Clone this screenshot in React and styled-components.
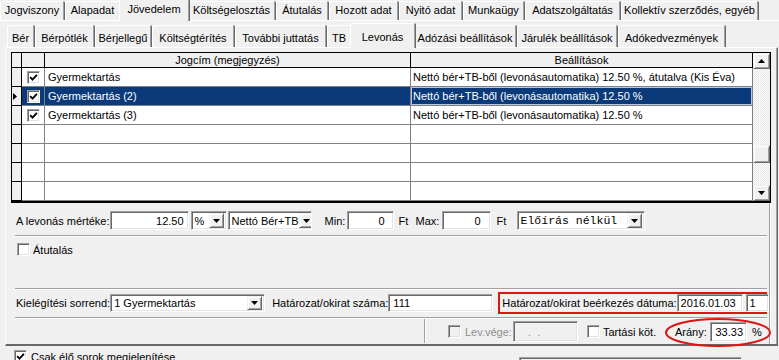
import React from "react";
import styled, { createGlobalStyle, css } from "styled-components";

const SEL = "#0a3a7a";
const RED = "#e01414";

const GlobalStyle = createGlobalStyle`
  html, body { margin: 0; padding: 0; background: #f0f0f0; }
  body {
    font-family: "Liberation Sans", Arial, sans-serif;
    font-size: 11px;
    color: #000;
  }
`;

const raised = css`
  background: #f0f0f0;
  border: 1px solid;
  border-color: #f0f0f0 #696969 #696969 #f0f0f0;
  box-shadow: inset 1px 1px #fff, inset -1px -1px #a0a0a0;
`;

const sunken = css`
  border: 1px solid;
  border-color: #a0a0a0 #fff #fff #a0a0a0;
  box-shadow: inset 1px 1px #696969, inset -1px -1px #e3e3e3;
`;

const Window = styled.div`
  width: 779px;
  height: 360px;
  overflow: hidden;
  background: #f0f0f0;
  display: flex;
  flex-direction: column;
`;

// tabs
const TabStrip = styled.div`
  display: flex;
  align-items: flex-end;
  flex-shrink: 0;
  height: ${p => p.$h}px;
  padding-left: ${p => p.$pl}px;
`;

const Tab = styled.div`
  position: relative;
  z-index: ${p => (p.$active ? 2 : 1)};
  flex: 0 0 ${p => (p.$active ? p.$w + 4 : p.$w)}px;
  height: ${p => (p.$active ? p.$h + 3 : p.$h)}px;
  margin: 0 ${p => (p.$active ? -2 : 0)}px ${p => (p.$active ? -1 : 0)}px;
  padding: ${p => p.$pt}px 0 ${p => (p.$active ? p.$pb + 1 : p.$pb)}px;
  box-sizing: border-box;
  display: flex;
  align-items: center;
  justify-content: center;
  background: #f0f0f0;
  border-right: 1px solid #696969;
  border-radius: 2px 2px 0 0;
  box-shadow: inset 1px 1px #fff, inset -1px 0 #a0a0a0;
  white-space: nowrap;
`;

const OuterPage = styled.div`
  flex-shrink: 0;
  border-top: 1px solid #fff;
  display: flex;
  flex-direction: column;
`;

const InnerPage = styled.div`
  margin-left: 5px;
  width: 773px;
  box-sizing: border-box;
  border-top: 1px solid #fff;
  border-left: 1px solid #fff;
  border-right: 1px solid #696969;
  border-bottom: 2px solid #696969;
  box-shadow: inset -1px 0 #a0a0a0;
  padding: 4px 0 0 5px;
`;

// grid
const GridBox = styled.div`
  width: 760px;
  height: 151px;
  box-sizing: border-box;
  border: 1px solid #000;
  border-bottom-width: 2px;
  display: flex;
  background: #fff;
`;

const Table = styled.div`
  flex: 1;
  display: flex;
  flex-direction: column;
`;

const GRow = styled.div`
  display: flex;
  flex: 0 0 ${p => (p.$header ? 15 : 19)}px;
`;

const GCell = styled.div`
  flex: 0 0 ${p => p.$w}px;
  box-sizing: border-box;
  display: flex;
  align-items: center;
  justify-content: ${p => (p.$center ? "center" : "flex-start")};
  padding-left: ${p => p.$pad || 0}px;
  border-right: 1px solid ${p => (p.$fixed ? "#000" : "#808080")};
  border-bottom: 1px solid ${p => (p.$fixed ? "#000" : "#808080")};
  background: ${p => (p.$fixed ? "#f0f0f0" : p.$sel ? SEL : "#fff")};
  color: ${p => (p.$sel ? "#fff" : "#000")};
  box-shadow: ${p => (p.$focus ? "inset 0 0 0 1px #b9c6df" : "none")};
  white-space: nowrap;
  overflow: hidden;
`;

const VScroll = styled.div`
  flex: 0 0 17px;
  display: flex;
  flex-direction: column;
  background: repeating-conic-gradient(#fff 0 25%, #e4e4e4 0 50%) 0 0 / 2px 2px;
`;

const ScrollBtn = styled.div`
  ${raised};
  box-sizing: border-box;
  flex: 0 0 16px;
  display: flex;
  align-items: center;
  justify-content: center;
`;

const Track = styled.div`
  flex: 1;
`;

const Thumb = styled.div`
  ${raised};
  box-sizing: border-box;
  height: 18px;
  margin-top: 76px;
`;

// form
const FormPanel = styled.div`
  width: 760px;
  box-sizing: border-box;
  border-right: 1px solid #fff;
  box-shadow: inset -1px 0 #a0a0a0;
  padding: 8px 0 0 5px;
  display: flex;
  flex-direction: column;
`;

const FormRow = styled.div`
  display: flex;
  align-items: center;
  height: ${p => p.$h}px;
  margin-top: ${p => p.$mt || 0}px;
`;

const Etched = styled.div`
  height: 0;
  border-top: 1px solid #a0a0a0;
  border-bottom: 1px solid #fff;
  margin: ${p => p.$mt}px 3px 0 -1px;
`;

const Label = styled.span`
  flex: 0 0 ${p => (p.$w ? `${p.$w}px` : "auto")};
  margin-left: ${p => p.$ml || 0}px;
  color: ${p => (p.$disabled ? "#8d8d8d" : "#000")};
  white-space: nowrap;
`;

const Edit = styled.div`
  ${sunken};
  flex: 0 0 ${p => p.$w}px;
  height: ${p => p.$h || 19}px;
  margin-left: ${p => p.$ml || 0}px;
  box-sizing: border-box;
  display: flex;
  align-items: center;
  justify-content: ${p => (p.$right ? "flex-end" : "flex-start")};
  padding: 0 ${p => p.$pr ?? 3}px 0 ${p => p.$pl ?? 3}px;
  background: ${p => (p.$disabled ? "#f0f0f0" : "#fff")};
  color: ${p => (p.$disabled ? "#8d8d8d" : "#000")};
  white-space: pre;
  overflow: hidden;
`;

const ComboText = styled.span`
  flex: 1;
  white-space: pre;
  font-family: ${p => (p.$mono ? '"Liberation Mono", "Courier New", monospace' : "inherit")};
  font-size: ${p => (p.$mono ? "11.5px" : "inherit")};
`;

const DropBtn = styled.span`
  ${raised};
  box-sizing: border-box;
  flex: 0 0 15px;
  height: ${p => p.$h}px;
  display: flex;
  align-items: center;
  justify-content: center;
`;

const CheckBox = styled.span`
  ${sunken};
  flex: 0 0 13px;
  width: 13px;
  height: 13px;
  box-sizing: border-box;
  margin-left: ${p => p.$ml || 0}px;
  display: inline-flex;
  align-items: center;
  justify-content: center;
  background: ${p => (p.$disabled ? "#f0f0f0" : "#fff")};
`;

const Highlight = styled.div`
  display: flex;
  align-items: center;
  margin-left: 5px;
  width: 269px;
  height: 22px;
  box-sizing: border-box;
  border: 2px solid ${RED};
  padding-left: 2px;
`;

const LeftWell = styled.div`
  flex: 0 0 410px;
  align-self: stretch;
  box-sizing: border-box;
  border-right: 1px solid #fff;
  box-shadow: inset -1px 0 #a0a0a0;
  margin-bottom: 1px;
`;

const AranyGroup = styled.div`
  position: relative;
  display: flex;
  align-items: center;
`;

const Ring = styled.svg`
  position: absolute;
  left: -10px;
  top: -4px;
  width: 106px;
  height: 29px;
  overflow: visible;
  pointer-events: none;
`;

const BottomBar = styled.div`
  display: grid;
  grid-template-columns: 519px 223px;
  align-items: start;
`;

const OnlyLive = styled.div`
  display: flex;
  align-items: center;
  height: 13px;
  padding: 4px 0 0 14px;
`;

const StubBox = styled.div`
  ${sunken};
  height: 20px;
  margin-top: 11px;
  background: #f0f0f0;
`;

const Down = () => (
  <svg width="7" height="4" viewBox="0 0 7 4">
    <polygon points="0,0 7,0 3.5,4" fill="#000" />
  </svg>
);

const Up = () => (
  <svg width="7" height="4" viewBox="0 0 7 4">
    <polygon points="0,4 7,4 3.5,0" fill="#000" />
  </svg>
);

const Tick = () => (
  <svg width="9" height="9" viewBox="0 0 9 9">
    <polyline points="1.2,4.2 3.5,6.6 7.9,1.8" fill="none" stroke="#000" strokeWidth="1.9" />
  </svg>
);

const Check = ({ checked, ml, disabled }) => (
  <CheckBox $ml={ml} $disabled={disabled}>
    {checked && <Tick />}
  </CheckBox>
);

const Combo = ({ w, h = 19, ml, mono, children }) => (
  <Edit $w={w} $h={h} $ml={ml} $pr={2}>
    <ComboText $mono={mono}>{children}</ComboText>
    <DropBtn $h={h - 4}>
      <Down />
    </DropBtn>
  </Edit>
);

const TOP_TABS = [
  ["Jogviszony", 65],
  ["Alapadat", 56],
  ["Jövedelem", 67, true],
  ["Költségelosztás", 88],
  ["Átutalás", 53],
  ["Hozott adat", 70],
  ["Nyitó adat", 64],
  ["Munkaügy", 62],
  ["Adatszolgáltatás", 96],
  ["Kollektív szerződés, egyéb", 138],
];

const SUB_TABS = [
  ["Bér", 28],
  ["Bérpótlék", 60],
  ["Bérjellegű", 57],
  ["Költségtérítés", 83],
  ["További juttatás", 92],
  ["TB", 25],
  ["Levonás", 62, true],
  ["Adózási beállítások", 103],
  ["Járulék beállítások", 101],
  ["Adókedvezmények", 108],
];

const ROWS = [
  { name: "Gyermektartás", set: "Nettó bér+TB-ből (levonásautomatika) 12.50 %, átutalva (Kis Éva)" },
  { name: "Gyermektartás (2)", set: "Nettó bér+TB-ből (levonásautomatika) 12.50 %", sel: true },
  { name: "Gyermektartás (3)", set: "Nettó bér+TB-ből (levonásautomatika) 12.50 %" },
  {},
  {},
  {},
  {},
];

const App = () => (
  <Window>
    <GlobalStyle />
    <TabStrip $h={20} $pl={0}>
      {TOP_TABS.map(([t, w, a]) => (
        <Tab key={t} $w={w} $h={19} $pt={0} $pb={2} $active={a}>
          {t}
        </Tab>
      ))}
    </TabStrip>

    <OuterPage>
      <TabStrip $h={26} $pl={7}>
        {SUB_TABS.map(([t, w, a]) => (
          <Tab key={t} $w={w} $h={22} $pt={3} $pb={0} $active={a}>
            {t}
          </Tab>
        ))}
      </TabStrip>

      <InnerPage>
        <GridBox>
          <Table>
            <GRow $header>
              <GCell $w={10} $fixed />
              <GCell $w={23} $fixed />
              <GCell $w={366} $fixed $center>Jogcím (megjegyzés)</GCell>
              <GCell $w={342} $fixed $center>Beállítások</GCell>
            </GRow>
            {ROWS.map((r, i) => (
              <GRow key={i}>
                <GCell $w={10} $fixed $pad={1}>
                  {r.sel && (
                    <svg width="4" height="7" viewBox="0 0 4 7">
                      <polygon points="0,0 4,3.5 0,7" fill="#000" />
                    </svg>
                  )}
                </GCell>
                <GCell $w={23} $center $sel={r.sel}>
                  {r.name && <Check checked />}
                </GCell>
                <GCell $w={366} $pad={3} $sel={r.sel}>{r.name}</GCell>
                <GCell $w={342} $pad={2} $sel={r.sel} $focus={r.sel}>{r.set}</GCell>
              </GRow>
            ))}
          </Table>
          <VScroll>
            <ScrollBtn><Up /></ScrollBtn>
            <Track><Thumb /></Track>
            <ScrollBtn><Down /></ScrollBtn>
          </VScroll>
        </GridBox>

        <FormPanel>
          <FormRow $h={19}>
            <Label $w={92}>A levonás mértéke:</Label>
            <Edit $w={79} $right $pr={4}>12.50</Edit>
            <Combo w={36} ml={2}>%</Combo>
            <Combo w={84} ml={1}>Nettó Bér+TB</Combo>
            <Label $w={22} $ml={13}>Min:</Label>
            <Edit $w={47} $right $pr={8}>0</Edit>
            <Label $w={17} $ml={5}>Ft</Label>
            <Label $w={26}>Max:</Label>
            <Edit $w={49} $right $pr={9}>0</Edit>
            <Label $w={20} $ml={6}>Ft</Label>
            <Combo w={128} mono>Előírás nélkül</Combo>
          </FormRow>

          <Etched $mt={5} />

          <FormRow $h={13} $mt={6}>
            <Check ml={1} />
            <Label $ml={3}>Átutalás</Label>
          </FormRow>

          <Etched $mt={32} />

          <FormRow $h={22} $mt={2}>
            <Label $w={93}>Kielégítési sorrend:</Label>
            <Combo w={155} h={18}>1 Gyermektartás</Combo>
            <Label $w={116} $ml={7}>Határozat/okirat száma:</Label>
            <Edit $w={105} $h={18} $pl={4}>111</Edit>
            <Highlight>
              <Label $w={171}>Határozat/okirat beérkezés dátuma:</Label>
              <Edit $w={66} $h={18}>2016.01.03</Edit>
              <Edit $w={23} $h={18} $ml={3}>1</Edit>
            </Highlight>
          </FormRow>

          <Etched $mt={3} />

          <FormRow $h={25}>
            <LeftWell />
            <Check ml={22} disabled />
            <Label $w={48} $ml={4} $disabled>Lev.vége:</Label>
            <Edit $w={65} $h={21} $disabled $pl={14}>{".  ."}</Edit>
            <Check ml={9} />
            <Label $w={72} $ml={3}>Tartási köt.</Label>
            <AranyGroup>
              <Label $w={35}>Arány:</Label>
              <Edit $w={37} $h={20} $right $pr={3}>33.33</Edit>
              <Label $ml={5}>%</Label>
              <Ring viewBox="0 0 106 29">
                <ellipse cx="53" cy="14.5" rx="52" ry="13.5" fill="none" stroke={RED} strokeWidth="2" />
              </Ring>
            </AranyGroup>
          </FormRow>
        </FormPanel>
      </InnerPage>

      <BottomBar>
        <OnlyLive>
          <Check checked />
          <Label $ml={4}>Csak élő sorok megjelenítése</Label>
        </OnlyLive>
        <StubBox />
      </BottomBar>
    </OuterPage>
  </Window>
);

export default App;
